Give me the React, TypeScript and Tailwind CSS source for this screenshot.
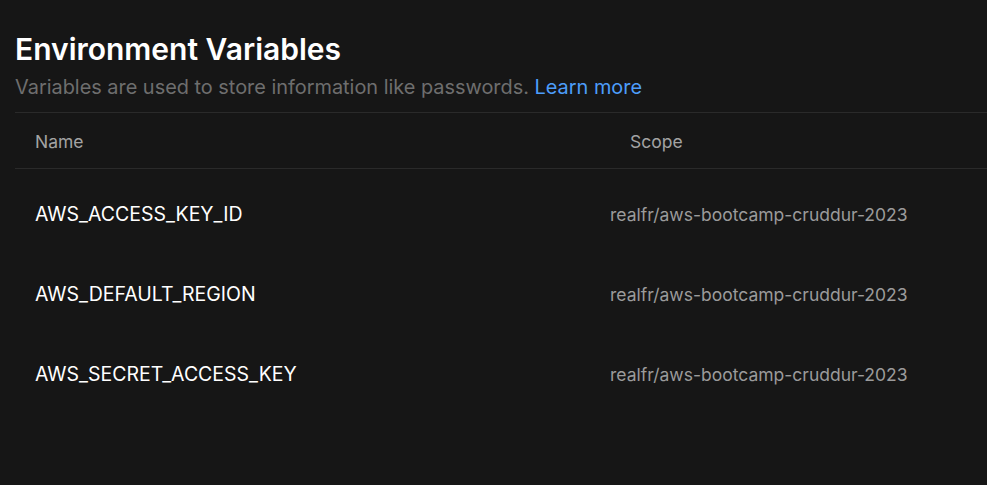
const variables = [
  { name: "AWS_ACCESS_KEY_ID", scope: "realfr/aws-bootcamp-cruddur-2023" },
  { name: "AWS_DEFAULT_REGION", scope: "realfr/aws-bootcamp-cruddur-2023" },
  { name: "AWS_SECRET_ACCESS_KEY", scope: "realfr/aws-bootcamp-cruddur-2023" },
];

export default function App() {
  return (
    <div
      className="h-[485px] w-full overflow-hidden bg-[#161616] pl-[15px] pt-[30px]"
      style={{ fontFamily: "Inter, 'Noto Sans', sans-serif" }}
    >
      <h1 className="text-[30px] font-semibold leading-[38px] text-white">Environment Variables</h1>
      <p className="mt-[6px] text-[19.9px] leading-[26px] text-[#6e6e6e]">
        Variables are used to store information like passwords.{" "}
        <a className="text-[#4d9dfa]">Learn more</a>
      </p>

      <div className="mt-[12px] border-t border-[#2a2a2a]">
        <div className="flex h-[56px] items-center border-b border-[#2a2a2a] pt-[3px] text-[17.5px] text-[#a3a3a3]">
          <div className="w-[595px] pl-[20px]">Name</div>
          <div className="pl-[20px]">Scope</div>
        </div>

        <div className="pt-[6px]">
          {variables.map((v) => (
            <div key={v.name} className="flex h-[80px] items-center">
              <div className="w-[595px] pl-[20px] text-[19.5px] text-white">{v.name}</div>
              <div className="text-[17.5px] text-[#9b9b9b]">{v.scope}</div>
            </div>
          ))}
        </div>
      </div>
    </div>
  );
}
